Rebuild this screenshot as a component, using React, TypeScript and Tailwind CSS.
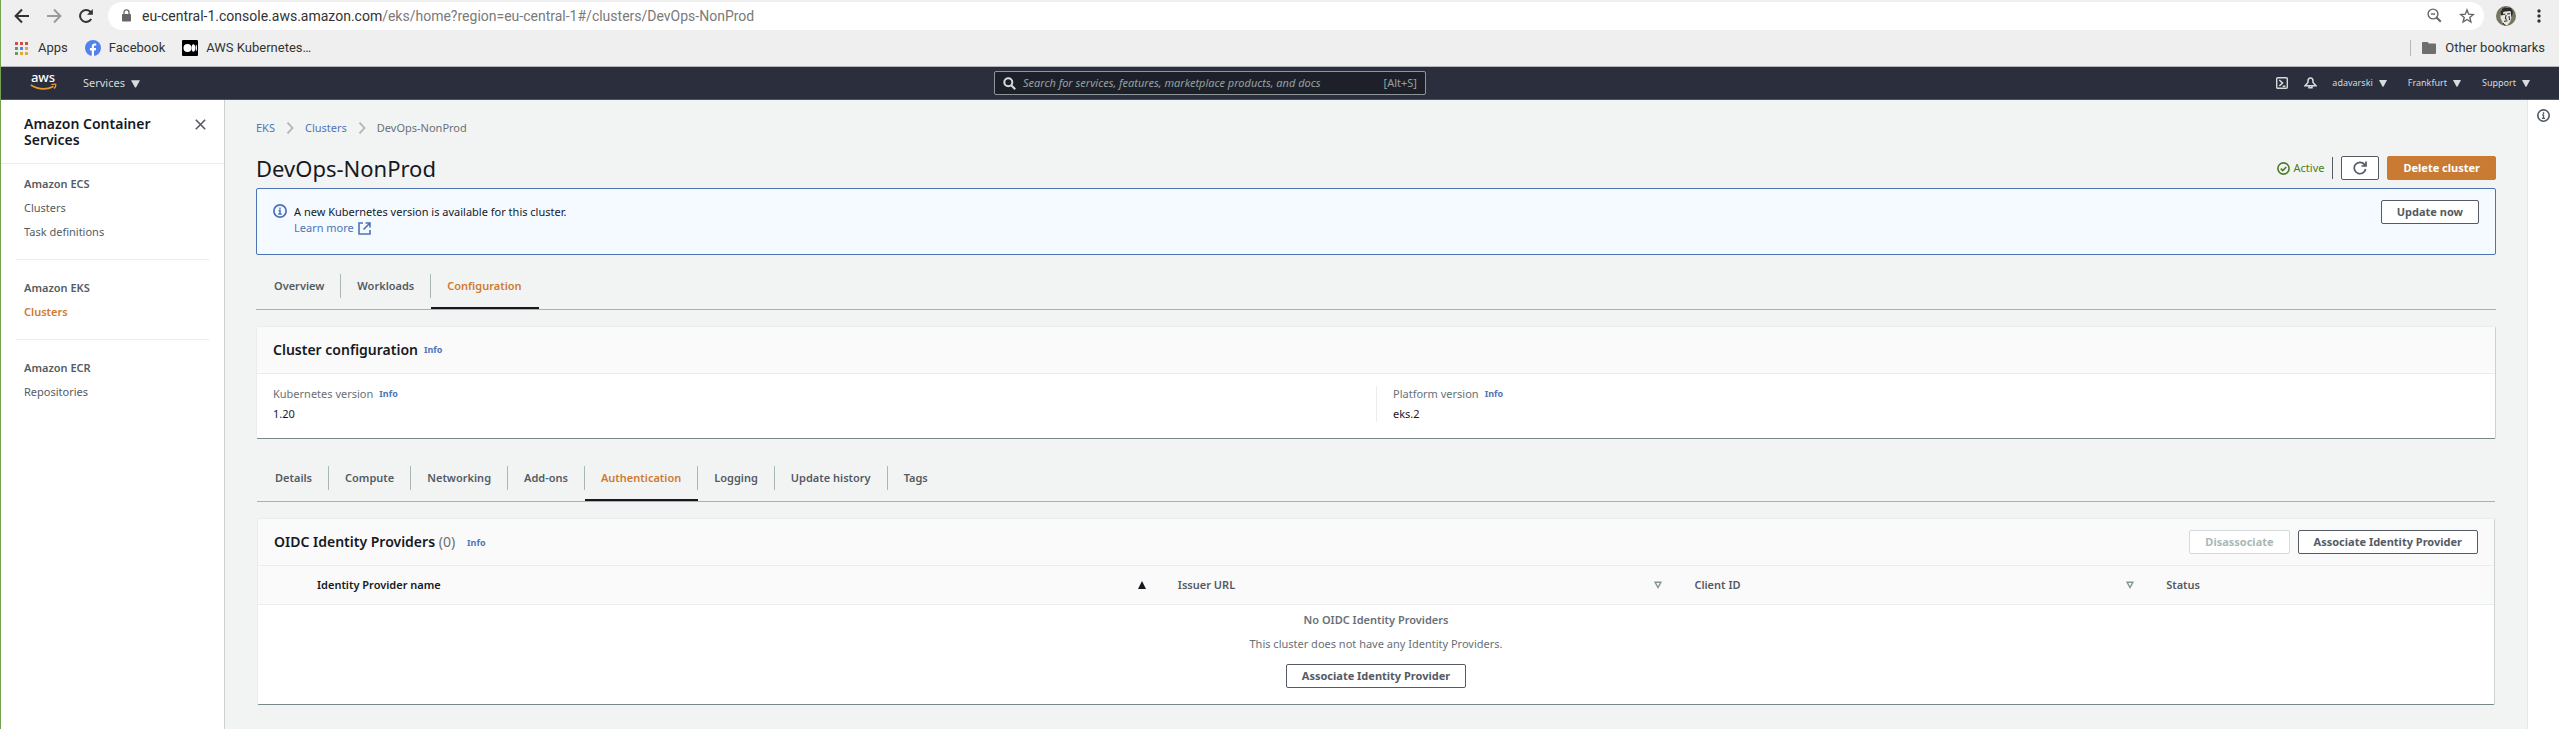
import React from "react";

const INK = "text-[#16191f]";

function Caret({ size = 9 }: { size?: number }) {
  return (
    <svg width={size} height={size} viewBox="0 0 9 9" fill="#d9dbdc" aria-hidden="true">
      <path d="M0 1.2h9L5 8.6H4z" />
    </svg>
  );
}

function InfoIcon({ className, size = 14 }: { className?: string; size?: number }) {
  return (
    <svg className={className} width={size} height={size} viewBox="0 0 16 16" fill="none" stroke="currentColor" strokeWidth="2" aria-hidden="true">
      <circle cx="8" cy="8" r="7" />
      <path d="M8 11.5V7.3H6.3M6 11.5h4M8 6V4" strokeWidth="1.7" />
    </svg>
  );
}

function Chevron() {
  return (
    <svg width="8" height="12" viewBox="0 0 8 12" fill="none" stroke="#aab7b8" strokeWidth="1.8" aria-hidden="true">
      <path d="M1.5 .7 6.5 6l-5 5.3" />
    </svg>
  );
}

function Info() {
  return <a href="#info" className="text-[9px] font-bold leading-4 text-[#4f74b8]">Info</a>;
}

function Browser() {
  return (
    <div className="border-b border-[#b3b5b6] bg-[#efefef] font-['Roboto','Noto_Sans',sans-serif] text-[#333]">
      <div className="flex h-[30px] items-center pt-px">
        <div className="flex w-[107px] items-center pl-[13px]">
          <button aria-label="Back" className="mr-4">
            <svg width="16" height="16" viewBox="0 0 16 16" fill="none" stroke="#333" strokeWidth="2"><path d="M15 8H2M8 1.5 1.6 8 8 14.5" /></svg>
          </button>
          <button aria-label="Forward" className="mr-4">
            <svg width="16" height="16" viewBox="0 0 16 16" fill="none" stroke="#9a9a9a" strokeWidth="2"><path d="M1 8h13M8 1.5 14.4 8 8 14.5" /></svg>
          </button>
          <button aria-label="Reload">
            <svg width="16" height="16" viewBox="0 0 16 16" fill="none" stroke="#333" strokeWidth="2"><path d="M13.2 11A6 6 0 1 1 12.3 3.7L14 5.5" /><path d="M14.8 1v5.8H9z" fill="#333" stroke="none" /></svg>
          </button>
        </div>
        <div className="flex h-7 flex-1 items-center rounded-full bg-white pl-[14px] pr-[9px]">
          <svg width="9" height="13" viewBox="0 0 9 13" fill="#666" aria-hidden="true"><rect y="5" width="9" height="7.5" rx=".8" /><path d="M2 5.5V3.3a2.5 2.5 0 0 1 5 0v2.2" fill="none" stroke="#666" strokeWidth="1.3" /></svg>
          <div className="ml-[11px] flex-1 text-[14px] leading-5 text-[#7a7a7a]">
            <span className="text-[#333]">eu-central-1.console.aws.amazon.com</span>/eks/home?region=eu-central-1#/clusters/DevOps-NonProd
          </div>
          <button aria-label="Zoom" className="mr-[17px]">
            <svg width="15" height="15" viewBox="0 0 15 15" fill="none" stroke="#666" strokeWidth="1.4"><circle cx="6" cy="6" r="4.9" /><path d="M3.9 6h4.2" /><path d="m9.5 9.5 4.3 4.3" strokeWidth="2" /></svg>
          </button>
          <button aria-label="Bookmark">
            <svg width="16" height="16" viewBox="0 0 16 16" fill="none" stroke="#666" strokeWidth="1.4"><path d="m8 1.9 1.7 4.3 4.6.3-3.5 3 1.1 4.5L8 11.5 4.1 14l1.1-4.5-3.5-3 4.600-.3z" /></svg>
          </button>
        </div>
        <button aria-label="Profile" className="ml-3">
          <svg width="20" height="20" viewBox="0 0 20 20"><circle cx="10" cy="10" r="10" fill="#77745f" /><path d="M5 4Q10-.5 15 3l1 7-2 6-3 3.500-4-2L4.500 12z" fill="#e6e6e2" /><path d="M4.500 8q0-5 4-6.500L15 2l2 4-1.500 6-1-7-7 .8L6 10z" fill="#2b2b29" /><path d="M6 8.500l3.300-.4M11 8l3-.3M10 9l-.6 4 1.500.2M8 15.300l3.500-.5M7 17l2 2.500M13 10l.5 4" fill="none" stroke="#222" strokeWidth="1" /></svg>
        </button>
        <button aria-label="Browser menu" className="ml-[21px] mr-[18px]">
          <svg width="4" height="14" viewBox="0 0 4 14" fill="#333"><circle cx="2" cy="2" r="1.7" /><circle cx="2" cy="7" r="1.7" /><circle cx="2" cy="12" r="1.7" /></svg>
        </button>
      </div>
      <div className="flex h-9 items-center pl-[14px] pr-[14px] text-[13px] leading-5">
        <a href="#apps" className="flex items-center gap-[10px]">
          <svg width="13" height="13" viewBox="0 0 13 13" aria-hidden="true">
            <g fill="#cc4f42"><path d="M0 0h3v3H0zM5 0h3v3H5zM10 0h3v3h-3z" /></g>
            <path d="M0 5h3v3H0zM0 10h3v3H0z" fill="#5f9d58" /><path d="M5 5h3v3H5z" fill="#4f86ec" /><path d="M10 5h3v3h-3zM5 10h3v3H5zM10 10h3v3h-3z" fill="#dfac3c" />
          </svg>
          Apps
        </a>
        <a href="#facebook" className="ml-[17px] flex items-center gap-2">
          <svg width="16" height="16" viewBox="0 0 16 16" aria-hidden="true"><circle cx="8" cy="8" r="8" fill="#5280ec" /><path d="M6.800 16v-5.600H4.900V8h1.900V6.400c0-2 1-3 2.800-3l1.600.1v2h-1c-1 0-1.200.5-1.200 1.200V8h2.100l-.4 2.400H9V16z" fill="#fff" /></svg>
          Facebook
        </a>
        <a href="#aws-kubernetes" className="ml-[17px] flex items-center gap-2">
          <svg width="16" height="16" viewBox="0 0 16 16" aria-hidden="true"><rect width="16" height="16" rx="1" fill="#000" /><circle cx="5.500" cy="8" r="4" fill="#fff" /><ellipse cx="11.400" cy="8" rx="1.800" ry="3.700" fill="#fff" /><ellipse cx="14.300" cy="8" rx=".7" ry="3.200" fill="#fff" /></svg>
          AWS Kubernetes…
        </a>
        <div className="ml-auto h-4 w-px bg-[#b8b8b8]" />
        <a href="#other" className="ml-[11px] flex items-center gap-[9px]">
          <svg width="14" height="12" viewBox="0 0 14 12" fill="#6e6e6e" aria-hidden="true"><path d="M1 0h4.500L7 1.500h6a1 1 0 0 1 1 1V11a1 1 0 0 1-1 1H1a1 1 0 0 1-1-1V1a1 1 0 0 1 1-1z" /></svg>
          Other bookmarks
        </a>
      </div>
    </div>
  );
}

function ConsoleNav() {
  return (
    <nav className="grid h-[33px] grid-cols-[993fr_432px_1133fr] items-center border-b border-[#4f5663] bg-[#2a2e3d] text-[#d5dbdb]">
      <div className="flex items-center pl-7">
        <a href="#home" aria-label="aws" className="flex w-7 flex-col items-center pb-[3px] text-white">
          <span className="text-[13px] font-medium leading-[10px]">aws</span>
          <svg className="mt-px" width="27" height="8" viewBox="0 0 27 8" fill="none" stroke="#e79a33" aria-hidden="true"><path d="M.8 2Q12 9 23.500 3.400" strokeWidth="1.700" /><path d="M21.500 1.600q3-.8 4.300-.2.300 2-1.600 4.200" strokeWidth="1.300" /></svg>
        </a>
        <button className="ml-[26px] flex items-center gap-[6px] text-[11px] leading-4">Services <Caret /></button>
      </div>
      <label className="flex h-6 items-center rounded-xs border border-[#8d979a] bg-[#1e2029] px-2 text-[11px] text-[#95a0a2]">
        <svg width="13" height="13" viewBox="0 0 13 13" fill="none" stroke="#d5dbdb" strokeWidth="2" aria-hidden="true"><circle cx="5.300" cy="5.300" r="4" /><path d="m8.200 8.200 4 4" /></svg>
        <input aria-label="Search" className="ml-[7px] min-w-0 flex-1 bg-transparent italic leading-4 outline-none placeholder:text-[#95a0a2] placeholder:opacity-100" placeholder="Search for services, features, marketplace products, and docs" />
        <span>[Alt+S]</span>
      </label>
      <div className="flex items-center justify-end pr-[29px] text-[9px] leading-4">
        <button aria-label="CloudShell" className="mr-4">
          <svg width="12" height="12" viewBox="0 0 12 12" fill="none" stroke="#d5dbdb" strokeWidth="1.400"><rect x=".7" y=".7" width="10.600" height="10.600" rx="1" /><path d="M3.300 3 6.500 6 3.300 9M6.700 9.300h2.700" strokeWidth="1.600" /></svg>
        </button>
        <button aria-label="Notifications" className="mr-[15px]">
          <svg width="13" height="12" viewBox="0 0 13 12" fill="none" stroke="#d5dbdb" strokeWidth="1.500"><path d="M6.500 1C4.800 1 4 2.300 4 4v1.500L1 8.700h11L9 5.500V4c0-1.700-.8-3-2.500-3zM5 9v1.800h3V9" /></svg>
        </button>
        <button className="flex items-center gap-[6px]">adavarski <Caret size={8} /></button>
        <button className="ml-[21px] flex items-center gap-[6px]">Frankfurt <Caret size={8} /></button>
        <button className="ml-[21px] flex items-center gap-[6px]">Support <Caret size={8} /></button>
      </div>
    </nav>
  );
}

const SIDE = [
  { title: "Amazon ECS", links: ["Clusters", "Task definitions"] },
  { title: "Amazon EKS", links: ["Clusters"], active: true },
  { title: "Amazon ECR", links: ["Repositories"] },
];

function Sidebar() {
  return (
    <aside className="w-[224px] shrink-0 border-r border-[#ccd1d1] bg-white text-[#545b64]">
      <div className="flex items-start justify-between border-b border-[#eaeded] pb-[15px] pl-[23px] pr-[18px] pt-4">
        <h2 className={`w-[150px] text-[14px] font-semibold leading-4 ${INK}`}>Amazon Container Services</h2>
        <button aria-label="Close" className="mt-[3px]">
          <svg width="11" height="11" viewBox="0 0 11 11" fill="none" stroke="#545b64" strokeWidth="1.600"><path d="m.8.800 9.400 9.400M10.200.8.800 10.200" /></svg>
        </button>
      </div>
      <div className="px-[15px]">
        {SIDE.map((g) => (
          <div key={g.title} className="border-b border-[#eaeded] px-2 pb-[19px] pt-3 text-[11px] leading-4 last:border-0 not-first:pt-5">
            <h3 className="mb-2 font-semibold">{g.title}</h3>
            <ul className="space-y-2">
              {g.links.map((l) => (
                <li key={l}><a href="#nav" className={g.active ? "font-semibold text-[#cf7a30]" : ""}>{l}</a></li>
              ))}
            </ul>
          </div>
        ))}
      </div>
    </aside>
  );
}

function Button({ children, kind = "normal" }: { children: React.ReactNode; kind?: "normal" | "primary" | "disabled" }) {
  const tone = {
    normal: "border-[#545b64] bg-white text-[#545b64]",
    primary: "border-[#c97b33] bg-[#c97b33] text-white",
    disabled: "border-[#d5dbdb] bg-white text-[#aab7b8]",
  }[kind];
  return (
    <button disabled={kind === "disabled"} className={`h-6 rounded-xs border px-[15px] text-[11px] font-bold leading-4 whitespace-nowrap ${tone}`}>
      {children}
    </button>
  );
}

function Tabs({ items, active }: { items: string[]; active: string }) {
  return (
    <div role="tablist" className="flex border-b border-[#aab0b1] text-[11px] font-semibold leading-6 text-[#545b64]">
      {items.map((t) => (
        <button
          key={t}
          role="tab"
          aria-selected={t === active}
          className={`group border-b-2 pb-[9px] ${t === active ? "border-[#16191f] text-[#cf7a30]" : "border-transparent"}`}
        >
          <span className="block border-r border-[#aab7b8] px-4 group-first:pl-[18px] group-last:border-transparent">{t}</span>
        </button>
      ))}
    </div>
  );
}

const CARD = "rounded-xs border border-t-[#eaeded] border-l-[#eaeded] border-r-[#ccd1d1] border-b-[#7b868a] bg-white";

function Sort({ active }: { active?: boolean }) {
  return (
    <svg width="8" height="8" viewBox="0 0 8 8" aria-hidden="true">
      {active ? <path d="M4 0 8 8H0z" fill="#16191f" /> : <path d="M1 1.200h6L4 6.500z" fill="none" stroke="#879596" strokeWidth="1.400" />}
    </svg>
  );
}

const COLS = [
  { name: "Identity Provider name", width: "w-[38.5%]", active: true },
  { name: "Issuer URL", width: "w-[23.1%]" },
  { name: "Client ID", width: "w-[21.1%]" },
];

function Main() {
  return (
    <main className="min-w-0 flex-1 bg-[#f2f4f4] px-[31px] pb-6 pt-5 text-[11px] leading-4 text-[#16191f]">
      <nav aria-label="Breadcrumb" className="flex items-center gap-[11px] text-[#4f74b8]">
        <a href="#eks">EKS</a>
        <Chevron />
        <a href="#clusters">Clusters</a>
        <Chevron />
        <span className="text-[#687078]">DevOps-NonProd</span>
      </nav>
      <div className="mt-5 flex h-6 items-center justify-between">
        <h1 className="text-[22px] leading-6">DevOps-NonProd</h1>
        <div className="flex items-center">
          <span className="flex items-center gap-1 text-[#4a7d22]">
            <svg width="13" height="13" viewBox="0 0 13 13" fill="none" stroke="currentColor" strokeWidth="1.600" aria-hidden="true"><circle cx="6.500" cy="6.500" r="5.600" /><path d="m3.800 6.600 2 2 3.500-3.600" /></svg>
            Active
          </span>
          <div className="mx-2 h-[22px] w-px bg-[#545b64]" />
          <button aria-label="Refresh" className="mr-2 flex h-6 w-[38px] items-center justify-center rounded-xs border border-[#545b64] bg-white">
            <svg width="14" height="14" viewBox="0 0 14 14" fill="none" stroke="#545b64" strokeWidth="1.700"><path d="M12.600 8A5.700 5.700 0 1 1 11.400 3.400L12.700 5M13 .5V5H8.500" /></svg>
          </button>
          <Button kind="primary">Delete cluster</Button>
        </div>
      </div>
      <section className="mt-2 flex h-[67px] items-start justify-between rounded-xs border border-[#4d73b5] bg-[#f4faff] px-4 pt-[11px]">
        <div className="flex gap-[7px] pt-1">
          <InfoIcon className="text-[#4d73b5]" />
          <div>
            <p>A new Kubernetes version is available for this cluster.</p>
            <a href="#learn" className="flex items-center gap-1 text-[#4f74b8]">
              Learn more
              <svg width="13" height="13" viewBox="0 0 13 13" fill="none" stroke="currentColor" strokeWidth="1.600" aria-hidden="true"><path d="M5 1H1v11h11V8M7.500 1H12v4.500M12 1 5.500 7.500" /></svg>
            </a>
          </div>
        </div>
        <Button>Update now</Button>
      </section>
      <div className="mt-[19px]">
        <Tabs items={["Overview", "Workloads", "Configuration"]} active="Configuration" />
      </div>
      <section className={`mt-4 ${CARD}`}>
        <header className="flex h-[47px] items-center gap-[6px] border-b border-[#eaeded] bg-[#fafafa] px-4">
          <h2 className="text-[14px] font-semibold leading-5">Cluster configuration</h2>
          <Info />
        </header>
        <dl className="grid grid-cols-2 pb-4 pt-3">
          {[["Kubernetes version", "1.20"], ["Platform version", "eks.2"]].map(([k, v]) => (
            <div key={k} className="border-l border-[#eaeded] pl-4 first:border-0">
              <dt className="flex items-center gap-[6px] text-[#687078]">{k} <Info /></dt>
              <dd className="mt-1">{v}</dd>
            </div>
          ))}
        </dl>
      </section>
      <div className="mt-[27px] px-px">
        <Tabs items={["Details", "Compute", "Networking", "Add-ons", "Authentication", "Logging", "Update history", "Tags"]} active="Authentication" />
        <section className={`mt-4 ${CARD}`}>
          <header className="flex h-[47px] items-center border-b border-[#eaeded] bg-[#fafafa] px-4">
            <h2 className="text-[14px] font-semibold leading-5">OIDC Identity Providers <span className="font-normal text-[#687078]">(0)</span></h2>
            <span className="ml-3"><Info /></span>
            <div className="ml-auto flex gap-2">
              <Button kind="disabled">Disassociate</Button>
              <Button>Associate Identity Provider</Button>
            </div>
          </header>
          <table className="w-full table-fixed text-left">
            <thead className="border-b border-[#eaeded] bg-[#fafafa] text-[#545b64]">
              <tr>
                <td className="w-[43px]" />
                {COLS.map((c) => (
                  <th key={c.name} className={`h-[38px] px-4 ${c.width} ${c.active ? INK : ""}`}>
                    <button className="flex w-full items-center justify-between font-semibold">{c.name}<Sort active={c.active} /></button>
                  </th>
                ))}
                <th className="px-4 font-semibold">Status</th>
              </tr>
            </thead>
            <tbody>
              <tr>
                <td colSpan={5} className="pb-4 pt-[7px] text-center text-[#687078]">
                  <p className="font-semibold">No OIDC Identity Providers</p>
                  <p className="mb-3 mt-2">This cluster does not have any Identity Providers.</p>
                  <Button>Associate Identity Provider</Button>
                </td>
              </tr>
            </tbody>
          </table>
        </section>
      </div>
    </main>
  );
}

export default function App() {
  return (
    <div className="flex min-h-screen flex-col border-l border-[#76a052] bg-white font-['Noto_Sans',sans-serif]">
      <Browser />
      <ConsoleNav />
      <div className="flex flex-1">
        <Sidebar />
        <Main />
        <aside className="w-8 shrink-0 border-l border-[#e3e7e7] bg-white pt-[9px]">
          <button aria-label="Open help panel" className="mx-auto block text-[#545b64]"><InfoIcon size={13} /></button>
        </aside>
      </div>
    </div>
  );
}
